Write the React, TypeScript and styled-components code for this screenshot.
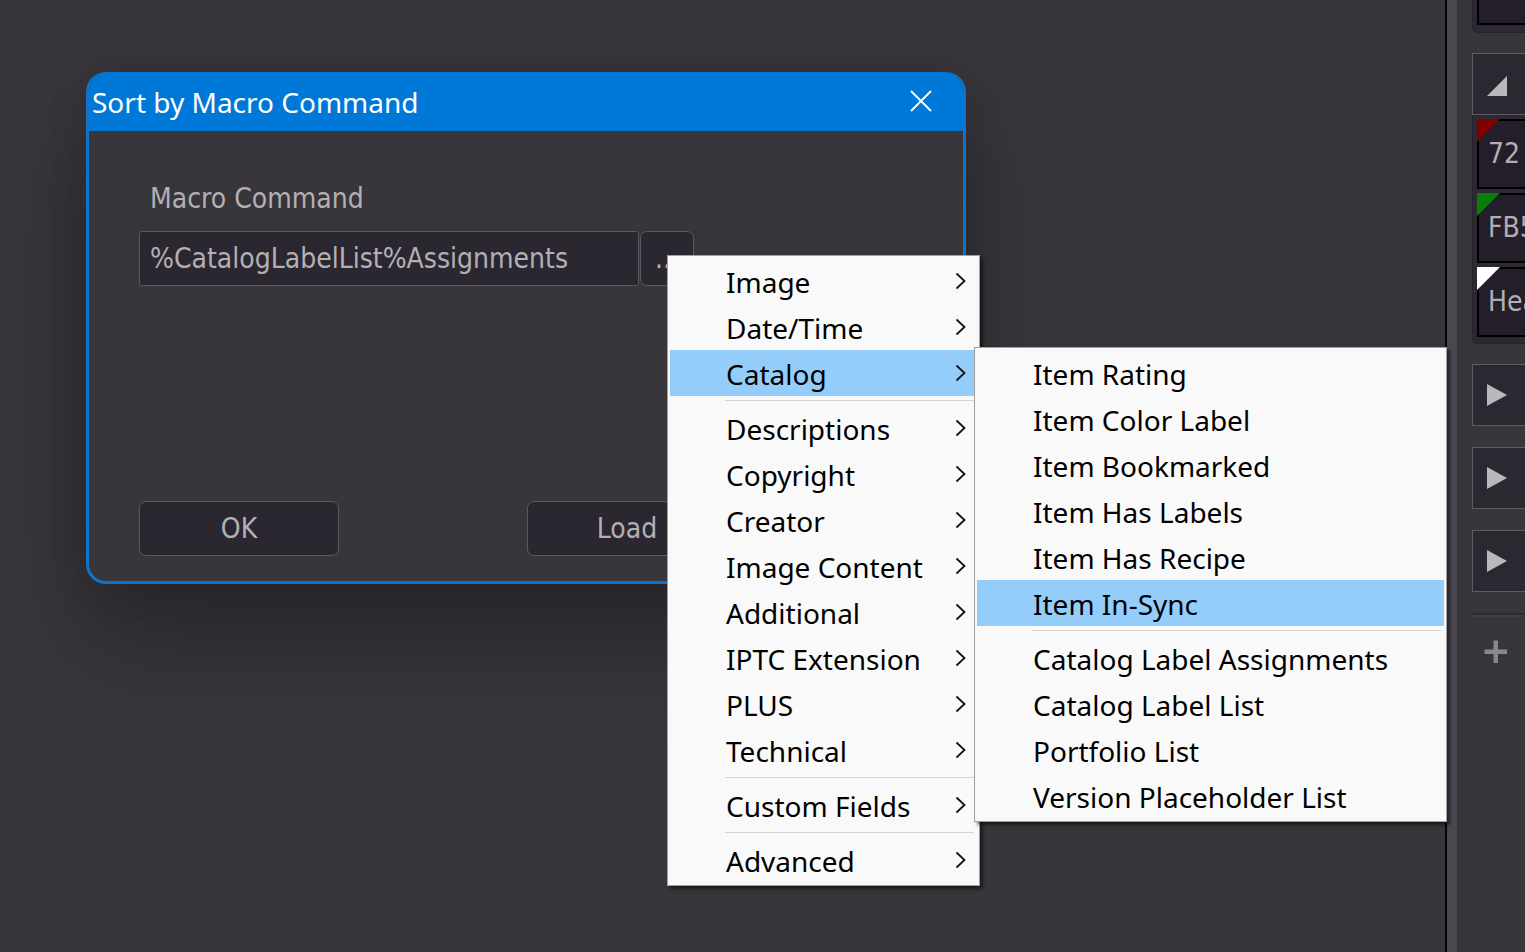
import React from "react";
import styled, { createGlobalStyle } from "styled-components";

const GlobalStyle = createGlobalStyle`
  * { box-sizing: border-box; }
  body {
    margin: 0;
    background: #38353b;
    font-family: "Noto Sans", "Open Sans", sans-serif;
    overflow: hidden;
  }
  button, input { font: inherit; margin: 0; }
`;

const Desktop = styled.div`
  display: flex;
  height: 100vh;
  overflow: hidden;
`;

const Workspace = styled.main`
  position: relative;
  flex: 1;
  min-width: 0;
  background: #38353b;
`;

const Splitter = styled.div`
  flex: 0 0 12px;
  border-left: 2px solid #050407;
  background: #4a4750;
`;

const Sidebar = styled.aside`
  flex: 0 0 68px;
  padding-left: 15px;
  background: #38353b;
  overflow: hidden;
`;

const Group = styled.div<{ $cut?: boolean }>`
  height: ${(p) => (p.$cut ? "33px" : "auto")};
  margin-bottom: 20px;
  padding: ${(p) => (p.$cut ? "0 0 7px 4px" : "4px 0 6px 4px")};
  display: flex;
  flex-direction: column;
  gap: 4px;
  background: #2d2932;
  border: solid #26232e;
  border-width: 0 0 1px 1px;
  border-radius: 0 0 0 6px;
`;

const CutCard = styled.div`
  flex: 1;
  background: #241e2a;
  border: solid #000;
  border-width: 0 0 2px 2px;
`;

const Card = styled.div<{ $tag: string }>`
  position: relative;
  height: 70px;
  padding-left: 9px;
  line-height: 66px;
  font-family: "DejaVu Sans Condensed", "Open Sans", sans-serif;
  font-size: 28px;
  white-space: nowrap;
  color: #b3aeb4;
  background: #241e2a;
  border: solid #000;
  border-width: 2px 0 2px 2px;

  &::before {
    content: "";
    position: absolute;
    left: -2px;
    top: -2px;
    border-top: 23px solid ${(p) => p.$tag};
    border-right: 23px solid transparent;
  }
`;

const Toggle = styled.button<{ $open?: boolean }>`
  display: flex;
  align-items: center;
  width: 100%;
  height: 62px;
  margin-bottom: ${(p) => (p.$open ? "0" : "21px")};
  padding: ${(p) => (p.$open ? "3px 0 0 14px" : "0 0 0 14px")};
  background: #2b2831;
  border: solid #5e5b61;
  border-width: 1px 0 1px 1px;
`;

const AddBar = styled.div`
  height: 80px;
  padding: 25px 0 0 12px;
  border-top: 2px solid #2d2a30;
  box-shadow: inset 0 2px 0 #403c42;
`;

const AddButton = styled.button`
  display: block;
  width: 24px;
  height: 24px;
  padding: 0;
  background: none;
  border: 0;
`;

const Dialog = styled.section`
  position: absolute;
  left: 86px;
  top: 72px;
  width: 880px;
  height: 512px;
  display: flex;
  flex-direction: column;
  overflow: hidden;
  background: #38353b;
  border: 3px solid #1173c7;
  border-top: 0;
  border-radius: 20px;
  box-shadow: 0 56px 100px rgba(0, 0, 0, 0.28), 0 0 40px rgba(0, 0, 0, 0.1);
`;

const TitleBar = styled.header`
  display: flex;
  align-items: center;
  justify-content: space-between;
  height: 59px;
  margin: 0 -3px;
  padding: 0 34px 0 6px;
  color: #fff;
  background: #0078d7;
`;

const Title = styled.h1`
  margin: 0;
  font-size: 28px;
  line-height: 60px;
  font-weight: 400;
`;

const CloseButton = styled.button`
  display: flex;
  padding: 0 0 2px;
  color: #fff;
  background: none;
  border: 0;
`;

const Form = styled.form`
  flex: 1;
  display: flex;
  flex-direction: column;
  padding: 50px;
  padding-bottom: 25px;
  font-family: "DejaVu Sans Condensed", "Open Sans", sans-serif;
  font-size: 28px;
  color: #b3b0b4;
`;

const Label = styled.label`
  padding-left: 11px;
  line-height: 36px;
  margin-bottom: 14px;
`;

const FieldRow = styled.div`
  display: flex;
  gap: 1px;
`;

const TextBox = styled.input`
  width: 500px;
  height: 55px;
  padding: 0 10px;
  color: inherit;
  background: #2b2730;
  border: 1px solid #5c595f;
  border-radius: 3px;
  outline: 0;
`;

const PushButton = styled.button<{ $width: number }>`
  width: ${(p) => p.$width}px;
  height: 55px;
  padding: 0;
  color: inherit;
  background: #2b2730;
  border: 1px solid #5c595f;
  border-radius: 7px;
`;

const Actions = styled.div`
  display: flex;
  gap: 188px;
  margin-top: auto;
`;

const Menu = styled.div<{ $x: number; $y: number; $width: number }>`
  position: absolute;
  left: ${(p) => p.$x}px;
  top: ${(p) => p.$y}px;
  width: ${(p) => p.$width}px;
  padding: 2px;
  background: #f9f9f9;
  border: 1px solid #a0a0a0;
  box-shadow: 3px 3px 3px rgba(0, 0, 0, 0.5);
`;

const MenuItem = styled.button<{ $active?: boolean }>`
  display: flex;
  align-items: center;
  justify-content: space-between;
  width: 100%;
  height: 46px;
  padding: 2px 10px 0 56px;
  font-size: 28px;
  line-height: 44px;
  text-align: left;
  white-space: nowrap;
  color: #000;
  background: ${(p) => (p.$active ? "#95cdfa" : "transparent")};
  border: 0;

  svg { margin: 0 0 2px; }
`;

const Divider = styled.hr`
  height: 1px;
  margin: 4px 3px 4px 55px;
  border: 0;
  background: #d3d3d3;
`;

const Chevron = () => (
  <svg width="12" height="18" viewBox="0 0 12 18" fill="none" stroke="#111" strokeWidth="1.8" aria-hidden="true">
    <path d="M1.5 1.5 9.500 9 1.500 16.500" />
  </svg>
);

const RightArrow = () => (
  <svg width="21" height="24" viewBox="0 0 21 24" fill="#bbb8bc" aria-hidden="true">
    <path d="M0 1v22l20-11z" />
  </svg>
);

const OpenArrow = () => (
  <svg width="21" height="20" viewBox="0 0 21 20" fill="#bbb8bc" aria-hidden="true">
    <path d="M20 0v20H0z" />
  </svg>
);

type Entry = string | null;

const macroEntries: Entry[] = [
  "Image", "Date/Time", "Catalog", null,
  "Descriptions", "Copyright", "Creator", "Image Content", "Additional",
  "IPTC Extension", "PLUS", "Technical", null,
  "Custom Fields", null,
  "Advanced",
];

const catalogEntries: Entry[] = [
  "Item Rating", "Item Color Label", "Item Bookmarked", "Item Has Labels",
  "Item Has Recipe", "Item In-Sync", null,
  "Catalog Label Assignments", "Catalog Label List", "Portfolio List",
  "Version Placeholder List",
];

function Entries({ list, active, nested }: { list: Entry[]; active: string; nested?: boolean }) {
  return (
    <>
      {list.map((entry, i) =>
        entry === null ? (
          <Divider key={i} />
        ) : (
          <MenuItem key={entry} type="button" role="menuitem" $active={entry === active}>
            <span>{entry}</span>
            {nested && <Chevron />}
          </MenuItem>
        )
      )}
    </>
  );
}

export default function App() {
  return (
    <>
      <GlobalStyle />
      <Desktop>
        <Workspace>
          <Dialog role="dialog" aria-labelledby="dialog-title">
            <TitleBar>
              <Title id="dialog-title">Sort by Macro Command</Title>
              <CloseButton type="button" aria-label="Close">
                <svg width="22" height="22" viewBox="0 0 22 22" stroke="currentColor" strokeWidth="1.8" aria-hidden="true">
                  <path d="M1 1 21 21M21 1 1 21" />
                </svg>
              </CloseButton>
            </TitleBar>
            <Form onSubmit={(e) => e.preventDefault()}>
              <Label htmlFor="macro">Macro Command</Label>
              <FieldRow>
                <TextBox id="macro" type="text" defaultValue="%CatalogLabelList%Assignments" />
                <PushButton type="button" $width={54}>...</PushButton>
              </FieldRow>
              <Actions>
                <PushButton type="submit" $width={200}>OK</PushButton>
                <PushButton type="button" $width={200}>Load</PushButton>
              </Actions>
            </Form>
          </Dialog>
        </Workspace>
        <Splitter />
        <Sidebar>
          <Group $cut>
            <CutCard />
          </Group>
          <Toggle type="button" aria-label="Collapse group" $open>
            <OpenArrow />
          </Toggle>
          <Group>
            <Card $tag="#800000">72</Card>
            <Card $tag="#078007">FB5</Card>
            <Card $tag="#ffffff">Hea</Card>
          </Group>
          <Toggle type="button" aria-label="Expand group 2"><RightArrow /></Toggle>
          <Toggle type="button" aria-label="Expand group 3"><RightArrow /></Toggle>
          <Toggle type="button" aria-label="Expand group 4"><RightArrow /></Toggle>
          <AddBar>
            <AddButton type="button" aria-label="Add">
              <svg width="24" height="24" viewBox="0 0 24 24" fill="#8a878c" aria-hidden="true">
                <path d="M9.500 0.500h4.500v9h9v4.500h-9v9h-4.500v-9h-9v-4.500h9z" />
              </svg>
            </AddButton>
          </AddBar>
        </Sidebar>
      </Desktop>
      <Menu role="menu" aria-label="Macro" $x={667} $y={255} $width={313}>
        <Entries list={macroEntries} active="Catalog" nested />
      </Menu>
      <Menu role="menu" aria-label="Catalog" $x={974} $y={347} $width={473}>
        <Entries list={catalogEntries} active="Item In-Sync" />
      </Menu>
    </>
  );
}
